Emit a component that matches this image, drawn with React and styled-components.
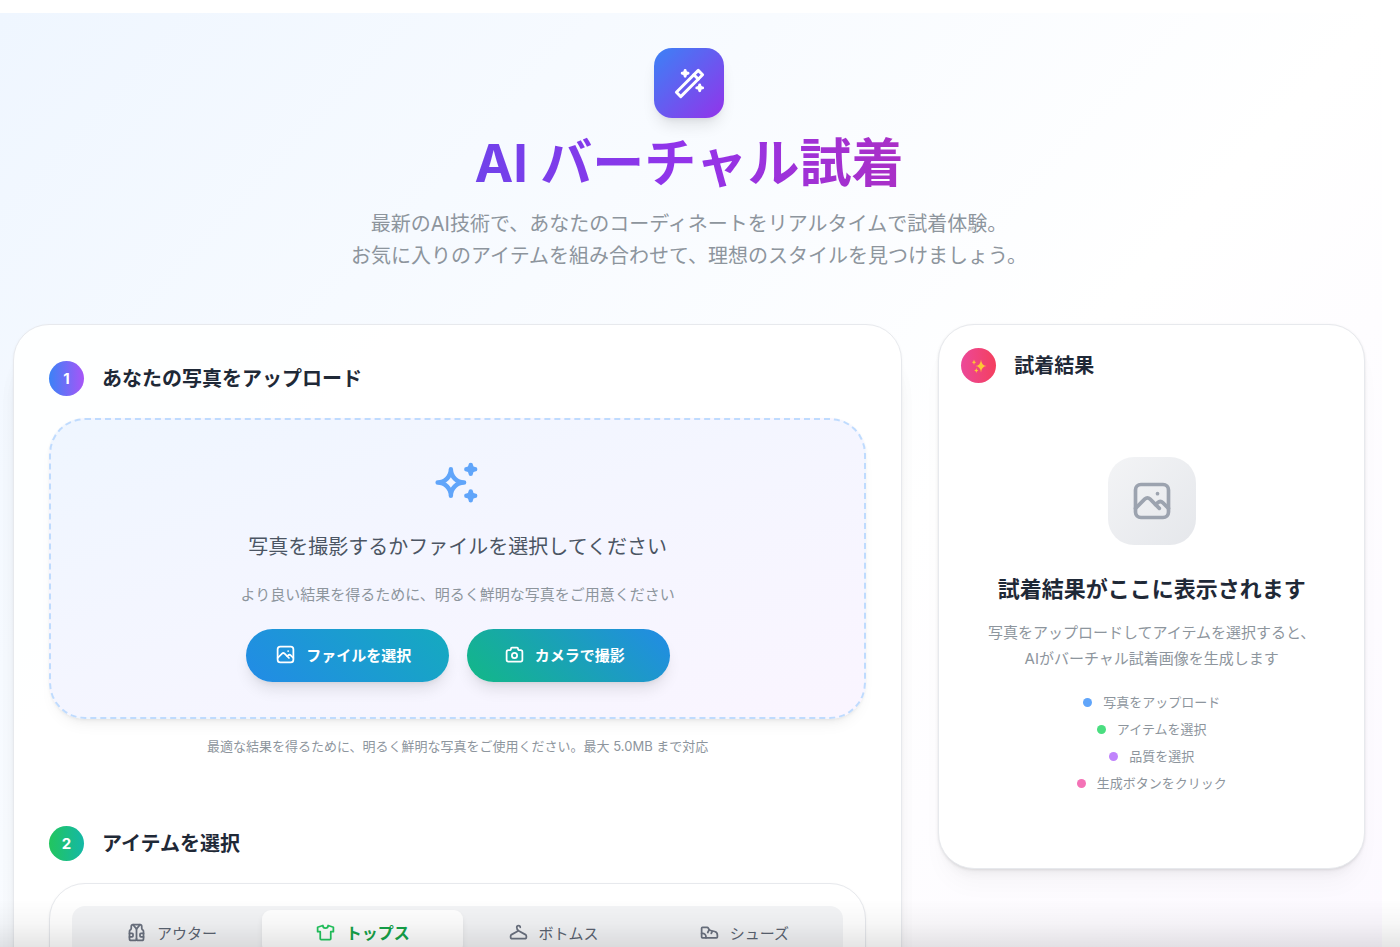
import React, { useState } from "react";
import styled, { createGlobalStyle } from "styled-components";
import {
  TbCamera,
  TbHanger,
  TbJacket,
  TbPhoto,
  TbShirt,
  TbShoe,
  TbSparkles,
  TbWand,
} from "react-icons/tb";

const tabMenu = [
  { name: "アウター", icon: TbJacket },
  { name: "トップス", icon: TbShirt },
  { name: "ボトムス", icon: TbHanger },
  { name: "シューズ", icon: TbShoe },
];

const guideSteps = [
  { text: "写真をアップロード", color: "#60a5fa" },
  { text: "アイテムを選択", color: "#4ade80" },
  { text: "品質を選択", color: "#c084fc" },
  { text: "生成ボタンをクリック", color: "#f472b6" },
];

const SparkleMark = () => (
  <svg width="16" height="16" viewBox="0 0 16 16" fill="#fcc934" aria-hidden="true">
    <path d="M10 1.5Q10.5 7.5 15.5 8Q10.5 8.5 10 14.5Q9.5 8.5 4.5 8Q9.5 7.5 10 1.5Z" />
    <path d="M3 1.5Q3.2 4 5.2 4.2Q3.2 4.4 3 6.9Q2.8 4.4 0.8 4.2Q2.8 4 3 1.5Z" />
    <path d="M5.3 10Q5.5 12.3 7.4 12.5Q5.5 12.7 5.3 15Q5.1 12.7 3.2 12.5Q5.1 12.3 5.3 10Z" />
  </svg>
);

const Header = () => {
  return (
    <HeaderContainer>
      <LogoBox>
        <TbWand size={35} />
      </LogoBox>
      <Title>AI バーチャル試着</Title>
      <SubTitle>
        最新のAI技術で、あなたのコーディネートをリアルタイムで試着体験。
        <br />
        お気に入りのアイテムを組み合わせて、理想のスタイルを見つけましょう。
      </SubTitle>
    </HeaderContainer>
  );
};

const PhotoUpload = () => {
  return (
    <section>
      <SectionHead>
        <StepBadge $from="#3b82f6" $to="#a855f7">
          1
        </StepBadge>
        <SectionTitle>あなたの写真をアップロード</SectionTitle>
      </SectionHead>
      <DropZone>
        <TbSparkles size={53} color="#60a5fa" />
        <DropText>写真を撮影するかファイルを選択してください</DropText>
        <DropHint>より良い結果を得るために、明るく鮮明な写真をご用意ください</DropHint>
        <ButtonGroup>
          <GradientButton type="button" $from="#228be6" $to="#15aabf">
            <TbPhoto size={21} />
            ファイルを選択
          </GradientButton>
          <GradientButton type="button" $from="#12b886" $to="#228be6">
            <TbCamera size={21} />
            カメラで撮影
          </GradientButton>
        </ButtonGroup>
      </DropZone>
      <Caption>
        最適な結果を得るために、明るく鮮明な写真をご使用ください。最大 5.0MB まで対応
      </Caption>
    </section>
  );
};

const ItemSelect = () => {
  const [currentTab, setCurrentTab] = useState(1);

  return (
    <section>
      <SectionHead>
        <StepBadge $from="#22c55e" $to="#14b8a6">
          2
        </StepBadge>
        <SectionTitle>アイテムを選択</SectionTitle>
      </SectionHead>
      <ItemBox>
        <TabList role="tablist">
          {tabMenu.map(({ name, icon: Icon }, index) => (
            <TabButton
              key={name}
              type="button"
              role="tab"
              aria-selected={currentTab === index}
              $active={currentTab === index}
              onClick={() => setCurrentTab(index)}
            >
              <Icon size={21} />
              {name}
            </TabButton>
          ))}
        </TabList>
        <TabPanel role="tabpanel" />
      </ItemBox>
    </section>
  );
};

const Result = () => {
  return (
    <ResultCard>
      <SectionHead>
        <StepBadge $from="#ec4899" $to="#f43f5e">
          <SparkleMark />
        </StepBadge>
        <SectionTitle>試着結果</SectionTitle>
      </SectionHead>
      <EmptyResult>
        <EmptyIcon>
          <TbPhoto size={44} />
        </EmptyIcon>
        <EmptyTitle>試着結果がここに表示されます</EmptyTitle>
        <EmptyText>
          写真をアップロードしてアイテムを選択すると、
          <br />
          AIがバーチャル試着画像を生成します
        </EmptyText>
        <StepList>
          {guideSteps.map((step) => (
            <StepItem key={step.text}>
              <Dot color={step.color} />
              {step.text}
            </StepItem>
          ))}
        </StepList>
      </EmptyResult>
    </ResultCard>
  );
};

const App = () => {
  return (
    <>
      <GlobalStyle />
      <Page>
        <Header />
        <Columns>
          <MainCard>
            <PhotoUpload />
            <ItemSelect />
          </MainCard>
          <Result />
        </Columns>
      </Page>
      <BottomShade />
    </>
  );
};

export default App;

const GlobalStyle = createGlobalStyle`
  *, *::before, *::after {
    box-sizing: border-box;
  }

  html {
    scrollbar-width: none;
  }

  body {
    margin: 0;
    padding: 13px 18px 0 0;
    background: #fff;
    color: #1f2937;
    font-family: Inter, "Noto Sans CJK JP", sans-serif;
  }

  h1, h2, h3, p, ul {
    margin: 0;
    padding: 0;
  }

  button {
    border: 0;
    font-family: inherit;
    cursor: pointer;
  }
`;

const Page = styled.main`
  padding: 35px 17px 53px 13px;
  background: linear-gradient(to bottom right, #eff6ff, #ffffff, #faf5ff);
`;

const HeaderContainer = styled.header`
  display: flex;
  flex-direction: column;
  align-items: center;
  margin-bottom: 52px;
`;

const LogoBox = styled.div`
  display: flex;
  justify-content: center;
  align-items: center;
  width: 70px;
  height: 70px;
  margin-bottom: 12px;
  border-radius: 18px;
  background: linear-gradient(135deg, #3b82f6, #9333ea);
  box-shadow: 0 10px 15px -3px rgba(0, 0, 0, 0.1), 0 4px 6px -4px rgba(0, 0, 0, 0.1);
  color: #fff;
`;

const Title = styled.h1`
  width: 100%;
  margin-bottom: 10px;
  background: linear-gradient(to right, #2563eb, #9333ea, #db2777);
  background-clip: text;
  color: transparent;
  font-size: 52px;
  font-weight: 700;
  line-height: 68px;
  text-align: center;
`;

const SubTitle = styled.p`
  color: #8d959d;
  font-size: 20px;
  line-height: 32px;
  text-align: center;
`;

const Columns = styled.div`
  display: grid;
  grid-template-columns: repeat(12, minmax(0, 1fr));
  gap: 36px;
  align-items: start;
`;

const Card = styled.div`
  border: 1px solid #e7e9ed;
  border-radius: 36px;
`;

const MainCard = styled(Card)`
  display: flex;
  flex-direction: column;
  gap: 70px;
  grid-column: span 8;
  padding: 36px 35px;
  background: rgba(255, 255, 255, 0.9);
  box-shadow: 0 1px 3px rgba(0, 0, 0, 0.05), 0 28px 23px -7px rgba(0, 0, 0, 0.05),
    0 36px 18px rgba(0, 0, 0, 0.03);
`;

const ResultCard = styled(Card)`
  grid-column: span 4;
  padding: 23px 22px 22px;
  background: #fff;
  box-shadow: 0 1px 3px rgba(0, 0, 0, 0.1), 0 20px 25px -5px rgba(0, 0, 0, 0.03),
    0 10px 10px -5px rgba(0, 0, 0, 0.04);
`;

const SectionHead = styled.div`
  display: flex;
  align-items: center;
  gap: 18px;
  margin-bottom: 22px;
`;

const StepBadge = styled.div`
  display: flex;
  justify-content: center;
  align-items: center;
  width: 35px;
  height: 35px;
  border-radius: 50%;
  background: linear-gradient(to right, ${(props) => props.$from}, ${(props) => props.$to});
  color: #fff;
  font-size: 15px;
  font-weight: 700;
`;

const SectionTitle = styled.h2`
  font-size: 20px;
  font-weight: 600;
  line-height: 32px;
`;

const DropZone = styled.div`
  display: flex;
  flex-direction: column;
  align-items: center;
  padding: 36px 35px 35px;
  border: 2px dashed #bfdbfe;
  border-radius: 36px;
  background: linear-gradient(to bottom right, #eff6ff, #faf5ff);
  box-shadow: 0 1px 3px rgba(0, 0, 0, 0.05), 0 10px 15px -5px rgba(0, 0, 0, 0.05),
    0 7px 7px -5px rgba(0, 0, 0, 0.04);
`;

const DropText = styled.p`
  margin: 22px 0 20px;
  color: #4b5563;
  font-size: 20px;
  line-height: 32px;
`;

const DropHint = styled.p`
  margin-bottom: 22px;
  color: #8d959d;
  font-size: 15px;
  line-height: 24px;
`;

const ButtonGroup = styled.div`
  display: flex;
  flex-wrap: wrap;
  justify-content: center;
  gap: 18px;
`;

const GradientButton = styled.button`
  display: flex;
  justify-content: center;
  align-items: center;
  gap: 10px;
  min-width: 203px;
  height: 53px;
  padding: 0 26px 2px 18px;
  border-radius: 36px;
  background: linear-gradient(45deg, ${(props) => props.$from}, ${(props) => props.$to});
  box-shadow: 0 10px 15px -3px rgba(0, 0, 0, 0.1), 0 4px 6px -4px rgba(0, 0, 0, 0.1);
  color: #fff;
  font-size: 15px;
  font-weight: 600;
`;

const Caption = styled.p`
  margin-top: 17px;
  color: #8d959d;
  font-size: 13px;
  line-height: 20px;
  text-align: center;
`;

const ItemBox = styled(Card)`
  padding: 22px;
  background: #fff;
  box-shadow: 0 1px 3px rgba(0, 0, 0, 0.05);
`;

const TabList = styled.div`
  display: grid;
  grid-template-columns: repeat(4, minmax(0, 1fr));
  padding: 4px;
  border-radius: 13px;
  background: #f3f4f6;
`;

const TabButton = styled.button`
  display: flex;
  justify-content: center;
  align-items: center;
  gap: 10px;
  height: 44px;
  margin: ${(props) => (props.$active ? "0 -5px" : "0")};
  padding: 0 6px;
  border-radius: 9px;
  background: ${(props) => (props.$active ? "#fff" : "transparent")};
  box-shadow: ${(props) => (props.$active ? "0 4px 6px -1px rgba(0, 0, 0, 0.1)" : "none")};
  color: ${(props) => (props.$active ? "#16a34a" : "#5b6472")};
  font-size: ${(props) => (props.$active ? "16px" : "15px")};
  font-weight: ${(props) => (props.$active ? 600 : 400)};

  svg {
    color: ${(props) => (props.$active ? "#22c55e" : "#6b7280")};
  }
`;

const TabPanel = styled.div`
  min-height: 440px;
`;

const EmptyResult = styled.div`
  display: flex;
  flex-direction: column;
  align-items: center;
  padding: 52px 0 53px;
  text-align: center;
`;

const EmptyIcon = styled.div`
  display: flex;
  justify-content: center;
  align-items: center;
  width: 88px;
  height: 88px;
  margin-bottom: 26px;
  border-radius: 26px;
  background: linear-gradient(135deg, #f3f4f6, #e5e7eb);
  color: #9ca3af;
`;

const EmptyTitle = styled.h3`
  margin-bottom: 13px;
  font-size: 22px;
  font-weight: 600;
  line-height: 36px;
`;

const EmptyText = styled.p`
  margin-bottom: 20px;
  color: #8d959d;
  font-size: 15px;
  line-height: 26px;
`;

const StepList = styled.ul`
  display: flex;
  flex-direction: column;
  gap: 7px;
  list-style: none;
`;

const StepItem = styled.li`
  display: flex;
  justify-content: center;
  align-items: center;
  gap: 11px;
  color: #8d959d;
  font-size: 13px;
  line-height: 20px;
`;

const Dot = styled.span`
  width: 9px;
  height: 9px;
  border-radius: 50%;
  background: ${(props) => props.color};
`;

const BottomShade = styled.div`
  position: fixed;
  right: 0;
  bottom: 0;
  left: 0;
  height: 48px;
  background: linear-gradient(to bottom, transparent, rgba(0, 0, 0, 0.03) 50%, rgba(0, 0, 0, 0.1));
  pointer-events: none;
`;
